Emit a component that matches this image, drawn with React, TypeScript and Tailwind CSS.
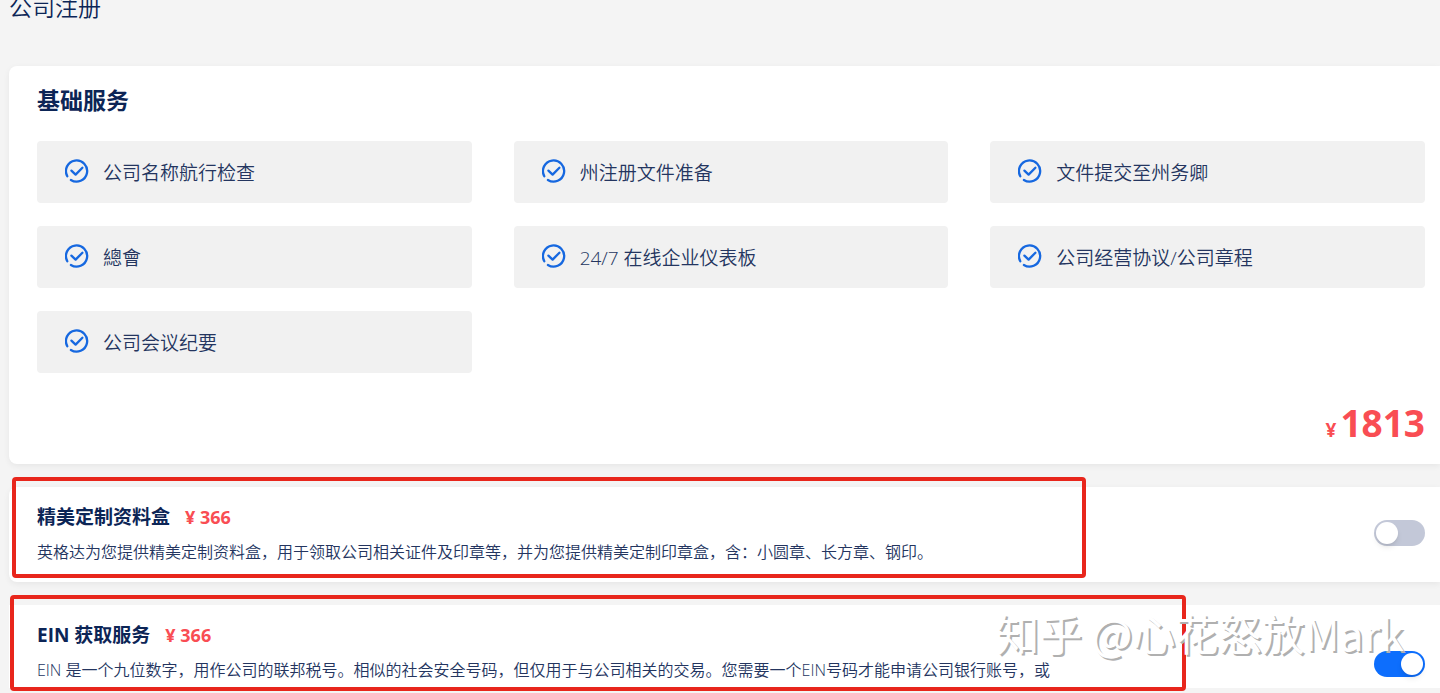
import { useState } from "react"

const services = [
  "公司名称航行检查",
  "州注册文件准备",
  "文件提交至州务卿",
  "總會",
  "24/7 在线企业仪表板",
  "公司经营协议/公司章程",
  "公司会议纪要",
]

function CheckIcon() {
  return (
    <svg
      viewBox="0 0 24 24"
      className="mb-0.5 h-6 w-6 shrink-0"
      fill="none"
      stroke="#1668e0"
      strokeWidth="2.3"
      strokeLinecap="round"
      strokeLinejoin="round"
      aria-hidden="true"
    >
      <path d="M2.3 17.2 A10.6 10.6 0 1 1 5.9 21" />
      <path d="M6.4 11.6 L10.6 15.6 L17.4 8.7" />
    </svg>
  )
}

interface SwitchProps {
  id: string
  label: string
  defaultChecked?: boolean
}

function Switch({ id, label, defaultChecked = false }: SwitchProps) {
  const [checked, setChecked] = useState(defaultChecked)

  return (
    <input
      id={id}
      type="checkbox"
      role="switch"
      aria-label={label}
      checked={checked}
      onChange={(e) => setChecked(e.target.checked)}
      className="flex h-[26px] w-[51px] shrink-0 cursor-pointer appearance-none items-center rounded-full bg-[#c3c8d8] p-0.5 before:h-[22px] before:w-[22px] before:rounded-full before:bg-white before:shadow-md before:content-[''] checked:justify-end checked:bg-[#0d6efd]"
    />
  )
}

export default function App() {
  return (
    <main className="h-screen overflow-hidden bg-[#f4f4f4] pl-[9px] font-['Open_Sans','Noto_Sans_CJK_SC',sans-serif] text-[#0c2556]">
      <h1 className="-mt-[9px] text-[23px] leading-8 font-[350]">公司注册</h1>

      <div className="mt-[43px] flex flex-col gap-[23px]">
        <section className="rounded-l-lg bg-white pt-[18px] pr-[15px] pb-4 pl-7 shadow-[0_2px_6px_rgba(0,0,0,0.06)]">
          <h2 className="text-[23px] leading-8 font-bold">基础服务</h2>
          <ul className="mt-[25px] grid grid-cols-3 gap-x-[42px] gap-y-[23px]">
            {services.map((name) => (
              <li
                key={name}
                className="flex h-[62px] items-center gap-[14px] rounded bg-[#f1f1f1] px-7 text-[19px] font-[350] text-[#24355f]"
              >
                <CheckIcon />
                <span className="pt-0.5">{name}</span>
              </li>
            ))}
          </ul>
          <p className="mt-6 flex items-baseline justify-end gap-1 font-bold text-[#f94d53]">
            <span className="text-[19px]">¥</span>
            <span className="text-[37px] leading-[51px]">1813</span>
          </p>
        </section>

        <section className="relative flex items-center justify-between rounded-l-lg bg-white pt-[14px] pr-[15px] pb-[17px] pl-7 shadow-[0_2px_6px_rgba(0,0,0,0.06)]">
          <div>
            <h3 className="flex gap-[15px] text-[19px] leading-8 font-bold">
              <label htmlFor="box">精美定制资料盒</label>
              <span className="text-[18px] text-[#f94d53]">¥ 366</span>
            </h3>
            <p className="mt-1.5 text-[16px] leading-[26px] font-[350] text-[#24355f]">
              英格达为您提供精美定制资料盒，用于领取公司相关证件及印章等，并为您提供精美定制印章盒，含：小圆章、长方章、钢印。
            </p>
          </div>
          <Switch id="box" label="精美定制资料盒" />
          <div className="pointer-events-none absolute -top-[10px] right-[354px] bottom-1 left-[3px] rounded-sm border-4 border-[#e8261c]" />
        </section>

        <section className="relative flex h-[83px] justify-between bg-white pr-[15px] pl-7">
          <div className="h-full w-3/4 overflow-hidden pt-[14px]">
            <h3 className="flex gap-[15px] text-[19px] leading-8 font-bold">
              <label htmlFor="ein">EIN 获取服务</label>
              <span className="text-[18px] text-[#f94d53]">¥ 366</span>
            </h3>
            <p className="mt-1.5 text-[16px] leading-[26px] font-[350] text-[#24355f]">
              EIN 是一个九位数字，用作公司的联邦税号。相似的社会安全号码，但仅用于与公司相关的交易。您需要一个EIN号码才能申请公司银行账号，或
            </p>
          </div>
          <div className="pt-[46px]">
            <Switch id="ein" label="EIN 获取服务" defaultChecked />
          </div>
          <div className="pointer-events-none absolute -top-[10px] right-[254px] -bottom-[3px] left-px rounded-sm border-4 border-[#e8261c]" />
          <p className="pointer-events-none absolute top-0 right-[36px] font-['Noto_Sans_CJK_SC',sans-serif] text-[43px] leading-[54px] font-normal whitespace-nowrap text-white [text-shadow:2px_2px_0_#b0b0b0]">
            知乎 @心花怒放Mark
          </p>
        </section>
      </div>
    </main>
  )
}
